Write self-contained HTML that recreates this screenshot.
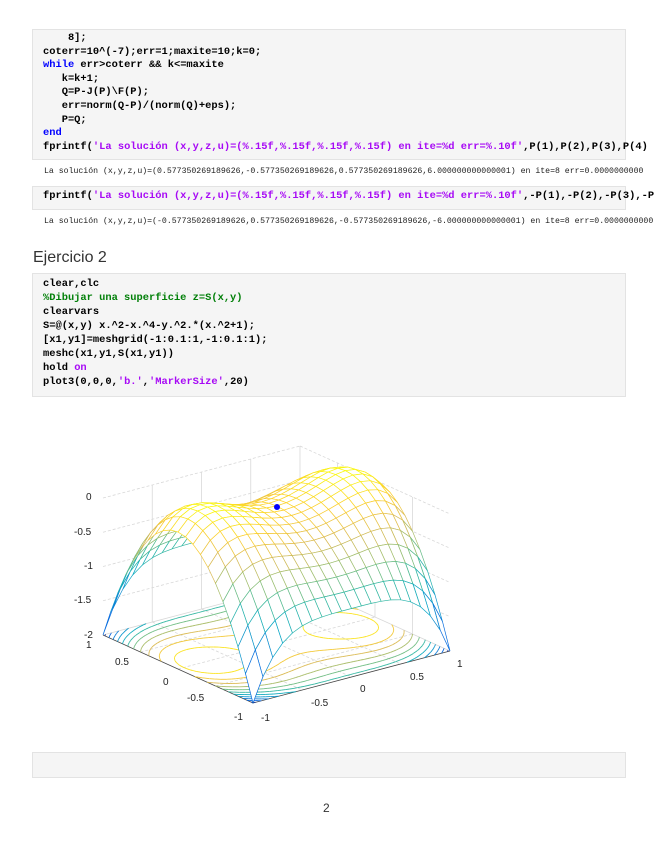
<!DOCTYPE html>
<html><head><meta charset="utf-8">
<style>
html,body{margin:0;padding:0;background:#fff;width:655px;height:848px;overflow:hidden;position:relative}
.blk{position:absolute;left:32px;width:592px;background:#f5f5f5;border:1px solid #e3e3e3}
.code{position:absolute;left:43px;font:bold 10.4px/13.6px "Liberation Mono",monospace;color:#000;white-space:pre;margin:0}
.k{color:#0000ff}.s{color:#a709f5}.c{color:#028009}
.out{position:absolute;left:44px;font:8.2px "Liberation Mono",monospace;color:#222;white-space:pre}
h2{position:absolute;left:33px;top:249px;margin:0;font:16px "Liberation Sans",sans-serif;color:#333}
.pg{position:absolute;left:323px;top:801px;font:12px "Liberation Sans",sans-serif;color:#333}
svg text{font-family:"Liberation Sans",sans-serif;font-size:10px;fill:#222}
</style></head><body>
<div class="blk" style="top:29px;height:129px"></div>
<pre class="code" style="top:32px">    8];
coterr=10^(-7);err=1;maxite=10;k=0;
<span class="k">while</span> err&gt;coterr &amp;&amp; k&lt;=maxite
   k=k+1;
   Q=P-J(P)\F(P);
   err=norm(Q-P)/(norm(Q)+eps);
   P=Q;
<span class="k">end</span>
fprintf(<span class="s">'La solución (x,y,z,u)=(%.15f,%.15f,%.15f,%.15f) en ite=%d err=%.10f'</span>,P(1),P(2),P(3),P(4)</pre>
<div class="out" style="top:167px">La solución (x,y,z,u)=(0.577350269189626,-0.577350269189626,0.577350269189626,6.000000000000001) en ite=8 err=0.0000000000</div>
<div class="blk" style="top:186px;height:22px"></div>
<pre class="code" style="top:190px">fprintf(<span class="s">'La solución (x,y,z,u)=(%.15f,%.15f,%.15f,%.15f) en ite=%d err=%.10f'</span>,-P(1),-P(2),-P(3),-P(4)</pre>
<div class="out" style="top:217px">La solución (x,y,z,u)=(-0.577350269189626,0.577350269189626,-0.577350269189626,-6.000000000000001) en ite=8 err=0.0000000000</div>
<h2>Ejercicio 2</h2>
<div class="blk" style="top:273px;height:122px"></div>
<pre class="code" style="top:277px;line-height:14px">clear,clc
<span class="c">%Dibujar una superficie z=S(x,y)</span>
clearvars
S=@(x,y) x.^2-x.^4-y.^2.*(x.^2+1);
[x1,y1]=meshgrid(-1:0.1:1,-1:0.1:1);
meshc(x1,y1,S(x1,y1))
hold <span class="s">on</span>
plot3(0,0,0,<span class="s">'b.'</span>,<span class="s">'MarkerSize'</span>,20)</pre>
<svg id="plot" style="position:absolute;left:0;top:0" width="655" height="848" xmlns="http://www.w3.org/2000/svg">
<g id="axes" stroke="#d8d8d8" stroke-width="0.8" fill="none"></g>
<g id="cont" fill="none" stroke-width="0.9"></g>
<g id="surf" stroke-width="0.7"></g>
<circle cx="277" cy="507" r="3" fill="#0000ff"/>
<g>
<text x="86" y="500">0</text><text x="74" y="535">-0.5</text><text x="84" y="569">-1</text><text x="74" y="603">-1.5</text><text x="84" y="638">-2</text>
<text x="86" y="648">1</text><text x="115" y="665">0.5</text><text x="163" y="685">0</text><text x="187" y="701">-0.5</text><text x="234" y="720">-1</text>
<text x="261" y="721">-1</text><text x="311" y="706">-0.5</text><text x="360" y="692">0</text><text x="410" y="680">0.5</text><text x="457" y="667">1</text>
</g>
</svg>
<div class="blk" style="top:752px;height:24px"></div>
<div class="pg">2</div>
<script>
var O=[276.5,643],ex=[98.5,-26],ey=[-75,-34],ez=68.5;
function P(x,y,z){return [O[0]+x*ex[0]+y*ey[0],O[1]+x*ex[1]+y*ey[1]-(z+2)*ez];}
function S(x,y){return x*x-x*x*x*x-y*y*(x*x+1);}
var st=[[0,[53,42,135]],[.125,[3,99,225]],[.25,[20,133,212]],[.375,[6,167,198]],[.5,[56,185,158]],[.625,[146,191,115]],[.75,[217,186,86]],[.875,[252,206,46]],[1,[249,251,14]]];
function col(z){var t=(z+2)/2.25;t=Math.max(0,Math.min(1,t));for(var i=1;i<st.length;i++){if(t<=st[i][0]){var a=st[i-1],b=st[i],f=(t-a[0])/(b[0]-a[0]);return 'rgb('+[0,1,2].map(function(k){return Math.round(a[1][k]+(b[1][k]-a[1][k])*f)}).join(',')+')';}}return 'rgb(249,251,14)';}
function f(p){return p[0].toFixed(1)+','+p[1].toFixed(1);}
var h='';
function L(a,b,dash){h+='<line x1="'+a[0]+'" y1="'+a[1]+'" x2="'+b[0]+'" y2="'+b[1]+'"'+(dash?' stroke-dasharray="3,2"':'')+'/>';}
var zt=0;
[-1.5,-1,-0.5,0].forEach(function(z){L(P(-1,1,z),P(1,1,z),1);L(P(1,1,z),P(1,-1,z),1);});
[-0.5,0,0.5].forEach(function(v){L(P(v,1,-2),P(v,1,zt));L(P(1,v,-2),P(1,v,zt));});
L(P(1,1,-2),P(1,1,zt));
[-0.5,0,0.5].forEach(function(v){L(P(v,1,-2),P(v,-1,-2),1);L(P(-1,v,-2),P(1,v,-2),1);});
L(P(-1,1,-2),P(1,1,-2));L(P(1,1,-2),P(1,-1,-2));
h+='<line x1="103" y1="635" x2="253" y2="703" stroke="#444"/><line x1="253" y1="703" x2="450" y2="651" stroke="#444"/>';
document.getElementById('axes').innerHTML=h;
h='';var N=60,lv=[];for(var l=-1.9;l<0.25;l+=0.2)lv.push(l);
function g(i){return -1+2*i/N;}
for(var i=0;i<N;i++)for(var j=0;j<N;j++){
 var x0=g(i),x1=g(i+1),y0=g(j),y1=g(j+1);
 var c=[[x0,y0,S(x0,y0)],[x1,y0,S(x1,y0)],[x1,y1,S(x1,y1)],[x0,y1,S(x0,y1)]];
 lv.forEach(function(v){var pts=[];for(var e=0;e<4;e++){var a=c[e],b=c[(e+1)%4];if((a[2]-v)*(b[2]-v)<0){var t=(v-a[2])/(b[2]-a[2]);pts.push(P(a[0]+(b[0]-a[0])*t,a[1]+(b[1]-a[1])*t,-2));}}
 if(pts.length>=2)h+='<line x1="'+pts[0][0].toFixed(1)+'" y1="'+pts[0][1].toFixed(1)+'" x2="'+pts[1][0].toFixed(1)+'" y2="'+pts[1][1].toFixed(1)+'" stroke="'+col(v)+'"/>';});
}
document.getElementById('cont').innerHTML=h;
var q=[];for(i=0;i<20;i++)for(j=0;j<20;j++){var a0=-1+i*0.1,b0=-1+j*0.1;q.push([a0,b0]);}
q.sort(function(a,b){return (b[0]*0.8+b[1])-(a[0]*0.8+a[1]);});
h='';q.forEach(function(c){var a0=c[0],b0=c[1],a1=a0+0.1,b1=b0+0.1;
 var z=[S(a0,b0),S(a1,b0),S(a1,b1),S(a0,b1)],zm=(z[0]+z[1]+z[2]+z[3])/4;
 h+='<polygon points="'+[P(a0,b0,z[0]),P(a1,b0,z[1]),P(a1,b1,z[2]),P(a0,b1,z[3])].map(f).join(' ')+'" fill="#fff" stroke="'+col(zm)+'"/>';});
document.getElementById('surf').innerHTML=h;
</script>
</body></html>
